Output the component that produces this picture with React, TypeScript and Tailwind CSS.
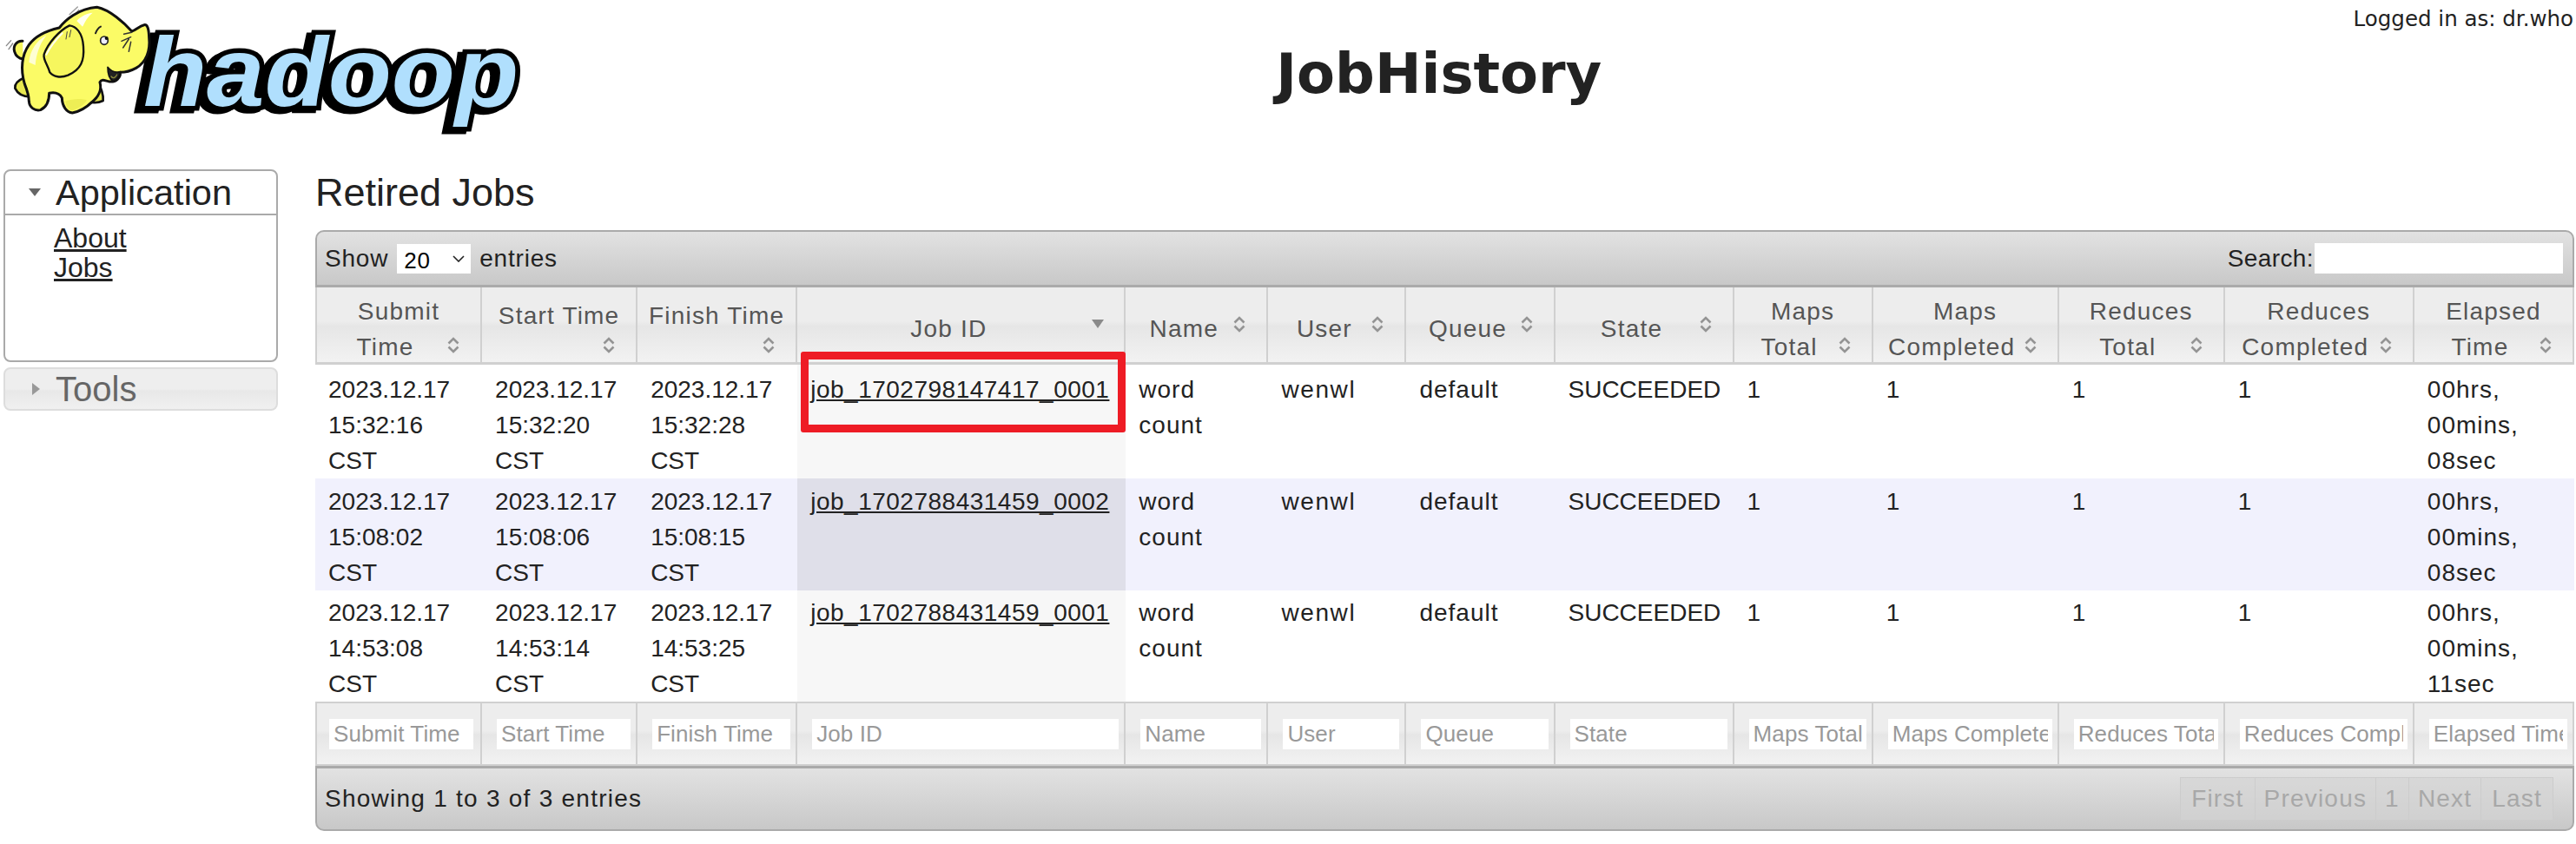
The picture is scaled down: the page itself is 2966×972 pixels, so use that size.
import React from "react";

const sans = "font-['Liberation_Sans',Arial,sans-serif]";

type Col = { w: string; lines: string[]; two: boolean; icon: "sort" | "desc"; ph: string };

const cols: Col[] = [
  { w: "w-[192px]", lines: ["Submit", "Time"], two: true, icon: "sort", ph: "Submit Time" },
  { w: "w-[179px]", lines: ["Start Time"], two: false, icon: "sort", ph: "Start Time" },
  { w: "w-[184px]", lines: ["Finish Time"], two: false, icon: "sort", ph: "Finish Time" },
  { w: "w-[378px]", lines: ["Job ID"], two: false, icon: "desc", ph: "Job ID" },
  { w: "w-[164px]", lines: ["Name"], two: false, icon: "sort", ph: "Name" },
  { w: "w-[159px]", lines: ["User"], two: false, icon: "sort", ph: "User" },
  { w: "w-[171px]", lines: ["Queue"], two: false, icon: "sort", ph: "Queue" },
  { w: "w-[206px]", lines: ["State"], two: false, icon: "sort", ph: "State" },
  { w: "w-[160px]", lines: ["Maps", "Total"], two: true, icon: "sort", ph: "Maps Total" },
  { w: "w-[214px]", lines: ["Maps", "Completed"], two: true, icon: "sort", ph: "Maps Completed" },
  { w: "w-[191px]", lines: ["Reduces", "Total"], two: true, icon: "sort", ph: "Reduces Total" },
  { w: "w-[218px]", lines: ["Reduces", "Completed"], two: true, icon: "sort", ph: "Reduces Completed" },
  { w: "w-[184px]", lines: ["Elapsed", "Time"], two: true, icon: "sort", ph: "Elapsed Time" },
];

const rows = [
  { pt: "pt-[8px]", s: ["2023.12.17", "15:32:16", "CST"], a: ["2023.12.17", "15:32:20", "CST"], f: ["2023.12.17", "15:32:28", "CST"], id: "job_1702798147417_0001", e: ["00hrs,", "00mins,", "08sec"] },
  { pt: "pt-[6px]", s: ["2023.12.17", "15:08:02", "CST"], a: ["2023.12.17", "15:08:06", "CST"], f: ["2023.12.17", "15:08:15", "CST"], id: "job_1702788431459_0002", e: ["00hrs,", "00mins,", "08sec"] },
  { pt: "pt-[5px]", s: ["2023.12.17", "14:53:08", "CST"], a: ["2023.12.17", "14:53:14", "CST"], f: ["2023.12.17", "14:53:25", "CST"], id: "job_1702788431459_0001", e: ["00hrs,", "00mins,", "11sec"] },
];

function Lines({ items }: { items: string[] }) {
  return (
    <>
      {items.map((t) => (
        <div key={t}>{t}</div>
      ))}
    </>
  );
}

function SortIcon({ top }: { top: string }) {
  return (
    <svg viewBox="0 0 14 19" className={`absolute right-[24px] w-[14px] h-[19px] ${top}`} fill="none" stroke="#949494" strokeWidth="2.6">
      <path d="M1.5 7.5 7 2l5.5 5.5" />
      <path d="M1.5 11.5 7 17l5.5-5.5" />
    </svg>
  );
}

function DescIcon() {
  return (
    <svg viewBox="0 0 14 10" className="absolute right-[23px] top-[37px] w-[14px] h-[10px]" fill="#8a8a8a">
      <path d="M0 0h14L7 10z" />
    </svg>
  );
}

function Logo() {
  return (
    <svg viewBox="0 0 640 180" className="w-[640px] h-[180px] shrink-0 blur-[0.6px]">
      <text
        x={165}
        y={122}
        fontSize={114}
        textLength={432}
        lengthAdjust="spacingAndGlyphs"
        fontFamily="'Liberation Sans', Arial, sans-serif"
        fontWeight="700"
        fontStyle="italic"
        fill="#b0dffd"
        stroke="#000"
        strokeWidth="11"
        strokeLinejoin="miter"
        paintOrder="stroke"
        className="drop-shadow-[-6px_3px_0_#000]"
      >
        hadoop
      </text>
      <g transform="scale(0.3333)" strokeLinejoin="round" strokeLinecap="round">
        {/* tail */}
        <path d="M78 142 C58 140 44 158 50 178 C54 192 66 202 80 204" fill="#f6f65c" stroke="#111" strokeWidth="9" />
        <path d="M22 158 L38 140 M30 170 L44 150" stroke="#888" strokeWidth="4" fill="none" />
        <path d="M240 50 L268 24 M252 58 L272 34" stroke="#999" strokeWidth="4" fill="none" />
        {/* far legs */}
        <path d="M335 285 C350 300 358 330 356 348 C340 356 318 356 300 350 Z" fill="#e4e44e" stroke="#111" strokeWidth="8" />
        <path d="M85 268 C62 278 50 292 52 305 C62 326 84 336 112 334 Z" fill="#e8e850" stroke="#111" strokeWidth="8" />
        {/* body & head */}
        <path
          d="M335 25 C380 34 430 80 455 108 C470 104 480 90 498 86 C510 84 514 100 515 130 C520 175 505 215 470 235 C450 246 430 250 415 250 C418 268 400 285 378 282 C365 280 352 270 345 284 C352 310 340 335 318 352 C300 370 275 385 250 390 C230 388 215 368 214 338 C205 322 190 318 170 322 C170 345 165 368 140 380 C120 384 102 372 100 350 C100 330 95 315 85 290 C70 240 75 190 100 155 C125 120 165 105 205 96 C225 70 270 30 335 25 Z"
          fill="#fbfb66"
          stroke="#111"
          strokeWidth="9"
        />
        {/* highlights */}
        <path d="M265 72 C280 55 305 44 320 44 C300 60 295 75 285 92 Z" fill="#fffff0" />
        <path d="M100 215 C104 175 125 140 160 122 C135 155 125 190 122 225 Z" fill="#fffff0" opacity="0.8" />
        <path d="M225 350 C250 340 280 340 300 345 C290 365 265 378 248 382 C235 378 228 365 225 350 Z" fill="#e6e64a" opacity="0.6" />
        {/* ear */}
        <path d="M240 88 C262 90 285 112 288 160 C292 210 280 240 235 260 C210 270 185 266 172 250 C165 225 148 205 152 188 C165 150 205 105 240 88 Z" fill="#f6f65e" stroke="#111" strokeWidth="7" />
        <path d="M232 110 L228 135 M245 104 L240 128" stroke="#444" strokeWidth="3" fill="none" />
        <path d="M160 188 C175 160 195 135 215 115" stroke="#fffff0" strokeWidth="6" fill="none" />
        {/* eye, brow */}
        <ellipse cx="360" cy="140" rx="13" ry="14" fill="#eef" stroke="#222" strokeWidth="5" />
        <circle cx="368" cy="132" r="6" fill="#111" />
        <path d="M330 115 C334 104 340 96 348 92" stroke="#222" strokeWidth="6" fill="none" />
        {/* trunk wrinkles */}
        <path d="M428 118 L455 112 M420 142 L452 128 M425 165 L445 135 M445 178 L452 145" stroke="#333" strokeWidth="4.5" fill="none" />
        {/* mouth */}
        <path d="M372 232 C372 252 376 272 390 280 C405 278 414 262 416 248 C400 252 385 248 372 232 Z" fill="#222" stroke="#111" strokeWidth="5" />
        <path d="M384 264 C390 272 398 270 404 258" stroke="#8a8a3a" strokeWidth="4" fill="none" />
      </g>
    </svg>
  );
}

export default function App() {
  return (
    <div className={`w-[2966px] h-[972px] bg-white text-[#222] overflow-hidden ${sans}`}>
      <header className="flex h-[195px] items-start">
        <Logo />
        <h1 className="flex-1 text-center font-['DejaVu_Sans',Verdana,sans-serif] font-bold text-[64px] leading-[78px] pt-[46px] pr-[36px] text-[#222]">JobHistory</h1>
        <div className="font-['DejaVu_Sans',Verdana,sans-serif] text-[24.5px] leading-[28px] pt-[8px] pr-[3px] text-[#222]">Logged in as: dr.who</div>
      </header>

      <main className="flex">
        <aside className="w-[316px] ml-[4px] shrink-0">
          <div className="border-2 border-[#aaa] rounded-[8px] h-[222px]">
            <div className="h-[51px] border-b-2 border-[#aaa] flex items-center text-[41.5px] leading-[50px]">
              <svg viewBox="0 0 14 9" className="w-[14px] h-[9px] ml-[27px] mr-[17px]" fill="#666"><path d="M0 0h14L7 9z" /></svg>
              Application
            </div>
            <div className="pl-[56px] pt-[9px] text-[32px] leading-[34px]">
              <a href="#" className="block underline">About</a>
              <a href="#" className="block underline">Jobs</a>
            </div>
          </div>
          <div className="mt-[6px] h-[50px] border-2 border-[#ddd] rounded-[8px] flex items-center text-[40px] text-[#666] bg-[linear-gradient(#eeeeee_50%,#e8e8e8_55%,#f0f0f0_100%)]">
            <svg viewBox="0 0 9 14" className="w-[9px] h-[14px] ml-[31px] mr-[18px]" fill="#999"><path d="M0 0v14l9-7z" /></svg>
            Tools
          </div>
        </aside>

        <section className="flex-1 ml-[43px] mr-[2px] min-w-0">
          <h2 className="text-[45px] leading-[52px] font-normal mt-[1px] h-[69px]">Retired Jobs</h2>

          <div className="h-[66px] border-2 border-b-[3px] border-[#aaa] rounded-t-[10px] bg-[linear-gradient(#e2e2e2,#c8c8c8)] flex items-center justify-between pl-[9px] pr-[9px] text-[28px] tracking-[0.8px]">
            <div className="flex items-center">
              <span>Show</span>
              <div className="relative ml-[10px] mr-[10px] w-[85px] h-[34px] bg-white flex items-center">
                <select defaultValue="20" className="appearance-none w-full h-full bg-white pl-[8px] text-[26px] text-black outline-none">
                  <option value="10">10</option>
                  <option value="20">20</option>
                  <option value="50">50</option>
                </select>
                <svg viewBox="0 0 14 8" className="absolute right-[7px] top-[13px] w-[14px] h-[8px]" fill="none" stroke="#222" strokeWidth="1.6"><path d="M1 1l6 6 6-6" /></svg>
              </div>
              <span>entries</span>
            </div>
            <label className="flex items-center">
              <span className="tracking-[0.4px]">Search:</span>
              <input className="w-[286px] h-[35px] bg-white outline-none ml-[1px] mr-[2px]" />
            </label>
          </div>

          <table className="w-full table-fixed border-separate border-spacing-0 text-[28px] leading-[41px]">
            <colgroup>
              {cols.map((c) => (
                <col key={c.ph} className={c.w} />
              ))}
            </colgroup>
            <thead>
              <tr>
                {cols.map((c) => (
                  <th
                    key={c.ph}
                    className="relative h-[89px] p-0 pt-[7px] font-normal text-center text-[#555] tracking-[1.2px] align-middle border-r-2 border-b-[3px] border-[#d0d0d0] first:border-l-2 bg-[linear-gradient(#ededed_45%,#e6e6e6_52%,#f2f2f2_100%)]"
                  >
                    {c.two ? (
                      <div className="-mb-[3px]">
                        <div>{c.lines[0]}</div>
                        <div className="pr-[31px]">{c.lines[1]}</div>
                      </div>
                    ) : c.ph === "Start Time" || c.ph === "Finish Time" ? (
                      <div className="pb-[30px] -mb-[1px]">{c.lines[0]}</div>
                    ) : (
                      <div className="pr-[28px] pt-[1px]">{c.lines[0]}</div>
                    )}
                    {c.icon === "desc" ? (
                      <DescIcon />
                    ) : (
                      <SortIcon top={c.two || c.ph === "Start Time" || c.ph === "Finish Time" ? "top-[57px]" : "top-[33px]"} />
                    )}
                  </th>
                ))}
              </tr>
            </thead>
            <tbody>
              {rows.map((r, i) => {
                const bg = i === 1 ? "bg-[#f1f1fd]" : "bg-white";
                const idBg = i === 1 ? "bg-[#dfdfe9]" : "bg-[#f7f7f7]";
                const td = `align-top pl-[15px] pr-0 ${r.pt} ${bg}`;
                const wide = `${td} tracking-[1px]`;
                return (
                  <tr key={r.id}>
                    <td className={td}><Lines items={r.s} /></td>
                    <td className={td}><Lines items={r.a} /></td>
                    <td className={td}><Lines items={r.f} /></td>
                    <td className={`relative align-top pl-[15px] tracking-[0.5px] ${r.pt} ${idBg}`}>
                      <a href="#" className="underline">{r.id}</a>
                      {i === 0 && (
                        <div className="absolute -top-[15px] left-[4px] w-[374px] h-[93px] border-[9px] border-[#ee1c25] rounded-[3px]" />
                      )}
                    </td>
                    <td className={wide}><Lines items={["word", "count"]} /></td>
                    <td className={`${td} tracking-[1.6px]`}>wenwl</td>
                    <td className={wide}>default</td>
                    <td className={td}>SUCCEEDED</td>
                    <td className={td}>1</td>
                    <td className={td}>1</td>
                    <td className={td}>1</td>
                    <td className={td}>1</td>
                    <td className={wide}><Lines items={r.e} /></td>
                  </tr>
                );
              })}
            </tbody>
            <tfoot>
              <tr>
                {cols.map((c) => (
                  <td
                    key={c.ph}
                    className="h-[74px] p-0 pl-[17px] pr-[6px] first:pl-[14px] first:pr-[8px] align-middle border-t-2 border-r-2 border-b-2 border-[#d0d0d0] first:border-l-2 bg-[linear-gradient(#ededed_45%,#e6e6e6_52%,#f2f2f2_100%)]"
                  >
                    <input
                      placeholder={c.ph}
                      className="block w-full h-[35px] bg-white px-[5px] text-[26px] tracking-[0.1px] outline-none placeholder:text-[#999]"
                    />
                  </td>
                ))}
              </tr>
            </tfoot>
          </table>

          <div className="h-[75px] border-2 border-t-[3px] border-[#aaa] rounded-b-[10px] bg-[linear-gradient(#e2e2e2,#c8c8c8)] flex items-center justify-between pl-[9px] pr-[22px] text-[28px]">
            <span className="tracking-[1.25px]">Showing 1 to 3 of 3 entries</span>
            <div className="flex h-[50px] text-[#a8a8a8] tracking-[1.2px] bg-[#d4d4d4]/60 border border-[#cccccc]">
              <span className="px-[12px] leading-[48px] border-r border-[#cccccc]">First</span>
              <span className="px-[10px] leading-[48px] border-r border-[#cccccc]">Previous</span>
              <span className="px-[10px] leading-[48px] border-r border-[#cccccc]">1</span>
              <span className="px-[10px] leading-[48px] border-r border-[#cccccc]">Next</span>
              <span className="px-[12px] leading-[48px]">Last</span>
            </div>
          </div>
        </section>
      </main>
    </div>
  );
}
